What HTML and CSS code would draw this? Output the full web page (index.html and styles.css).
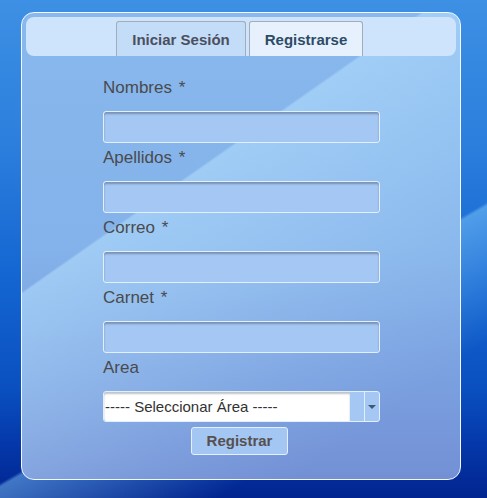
FILE: index.html
```html
<!DOCTYPE html>
<html lang="es">
<head>
<meta charset="utf-8">
<title>Registrarse</title>
<link rel="stylesheet" href="styles.css">
</head>
<body>
<div class="panel">
  <div class="tabs">
    <div class="tab">Iniciar Sesión</div>
    <div class="tab active">Registrarse</div>
  </div>
  <form class="form">
    <div class="field">
      <label class="label">Nombres <span class="req">*</span></label>
      <div class="input"></div>
    </div>
    <div class="field">
      <label class="label">Apellidos <span class="req">*</span></label>
      <div class="input"></div>
    </div>
    <div class="field">
      <label class="label">Correo <span class="req">*</span></label>
      <div class="input"></div>
    </div>
    <div class="field">
      <label class="label">Carnet <span class="req">*</span></label>
      <div class="input"></div>
    </div>
    <div class="field">
      <label class="label">Area</label>
      <div class="select">
        <div class="select-text">----- Seleccionar Área -----</div>
        <div class="select-gap"></div>
        <div class="select-btn"><span class="arrow"></span></div>
      </div>
    </div>
    <div class="actions">
      <div class="button">Registrar</div>
    </div>
  </form>
</div>
</body>
</html>
```
FILE: styles.css
```css
html, body {
  margin: 0;
  padding: 0;
}
body {
  width: 487px;
  height: 498px;
  overflow: hidden;
  font-family: "Liberation Sans", Arial, sans-serif;
  background:
    linear-gradient(150deg, rgba(255,255,255,0) 62%, rgba(140,210,255,0.45) 62.5%, rgba(140,210,255,0) 80%),
    linear-gradient(180deg, #3d90e3 0%, #2b7edc 30%, #1466d2 55%, #0a50c0 78%, #0436a8 90%, #02258f 100%);
  padding-top: 12px;
  box-sizing: border-box;
}
.panel {
  margin-left: 21px;
  width: 440px;
  height: 468px;
  box-sizing: border-box;
  border: 1px solid #f4f9ff;
  border-radius: 13px;
  padding: 4px;
  background:
    linear-gradient(145deg, rgba(255,255,255,0) 36%, rgba(185,228,255,0.5) 36.4%, rgba(185,228,255,0.12) 70%, rgba(185,228,255,0) 85%),
    linear-gradient(180deg, #88b8ee 0%, #84b2ea 50%, #7a9fdf 80%, #7390d5 100%);
}
.tabs {
  height: 39px;
  box-sizing: border-box;
  background: #cde4fc;
  border-radius: 8px;
  display: flex;
  align-items: flex-end;
  padding-left: 90px;
  gap: 3px;
}
.tab {
  height: 35px;
  box-sizing: border-box;
  border: 1px solid #a3adb9;
  border-bottom: none;
  border-radius: 3px 3px 0 0;
  background: #c3dcf8;
  color: #4b4f5e;
  font-weight: bold;
  font-size: 15px;
  line-height: 36px;
  width: 130px;
  text-align: center;
  white-space: nowrap;
}
.tab.active {
  background: #e6f1fd;
  color: #2e4b66;
  width: 114px;
}
.form {
  padding: 22px 0 0 77px;
  margin: 0;
}
.field {
  width: 277px;
  margin-bottom: 5px;
}
.label {
  display: block;
  font-size: 17px;
  line-height: 20px;
  color: #4a4a4c;
  margin-bottom: 13px;
}
.req {
  margin-left: 2px;
}
.input {
  height: 32px;
  box-sizing: border-box;
  border: 1px solid #e2effd;
  border-radius: 3px;
  background: #a4c7f4;
  box-shadow: inset 0 2px 2px rgba(70,80,100,0.45);
}
.select {
  display: flex;
  height: 31px;
  box-sizing: border-box;
  border: 1px solid #e2effd;
  border-radius: 3px;
  overflow: hidden;
  background: #a4c7f4;
}
.select-text {
  width: 245px;
  background: #fff;
  box-shadow: inset 0 2px 2px rgba(70,80,100,0.35);
  font-size: 15px;
  line-height: 29px;
  color: #333;
  padding-left: 1px;
  white-space: nowrap;
  overflow: hidden;
  border-radius: 2px 0 0 2px;
}
.select-gap {
  width: 14px;
  border-right: 1px solid #e2effd;
}
.select-btn {
  flex: 1;
  display: flex;
  align-items: center;
  justify-content: center;
}
.arrow {
  width: 0;
  height: 0;
  border-left: 4px solid transparent;
  border-right: 4px solid transparent;
  border-top: 4px solid #3e5a72;
}
.actions {
  display: flex;
  justify-content: center;
  width: 277px;
  margin-top: 2px;
}
.button {
  width: 97px;
  height: 28px;
  box-sizing: border-box;
  border: 1px solid #e3f0fd;
  border-radius: 3px;
  background: #a3c6f3;
  color: #57504f;
  font-weight: bold;
  font-size: 15px;
  line-height: 26px;
  text-align: center;
  margin-right: 4px;
}
```
